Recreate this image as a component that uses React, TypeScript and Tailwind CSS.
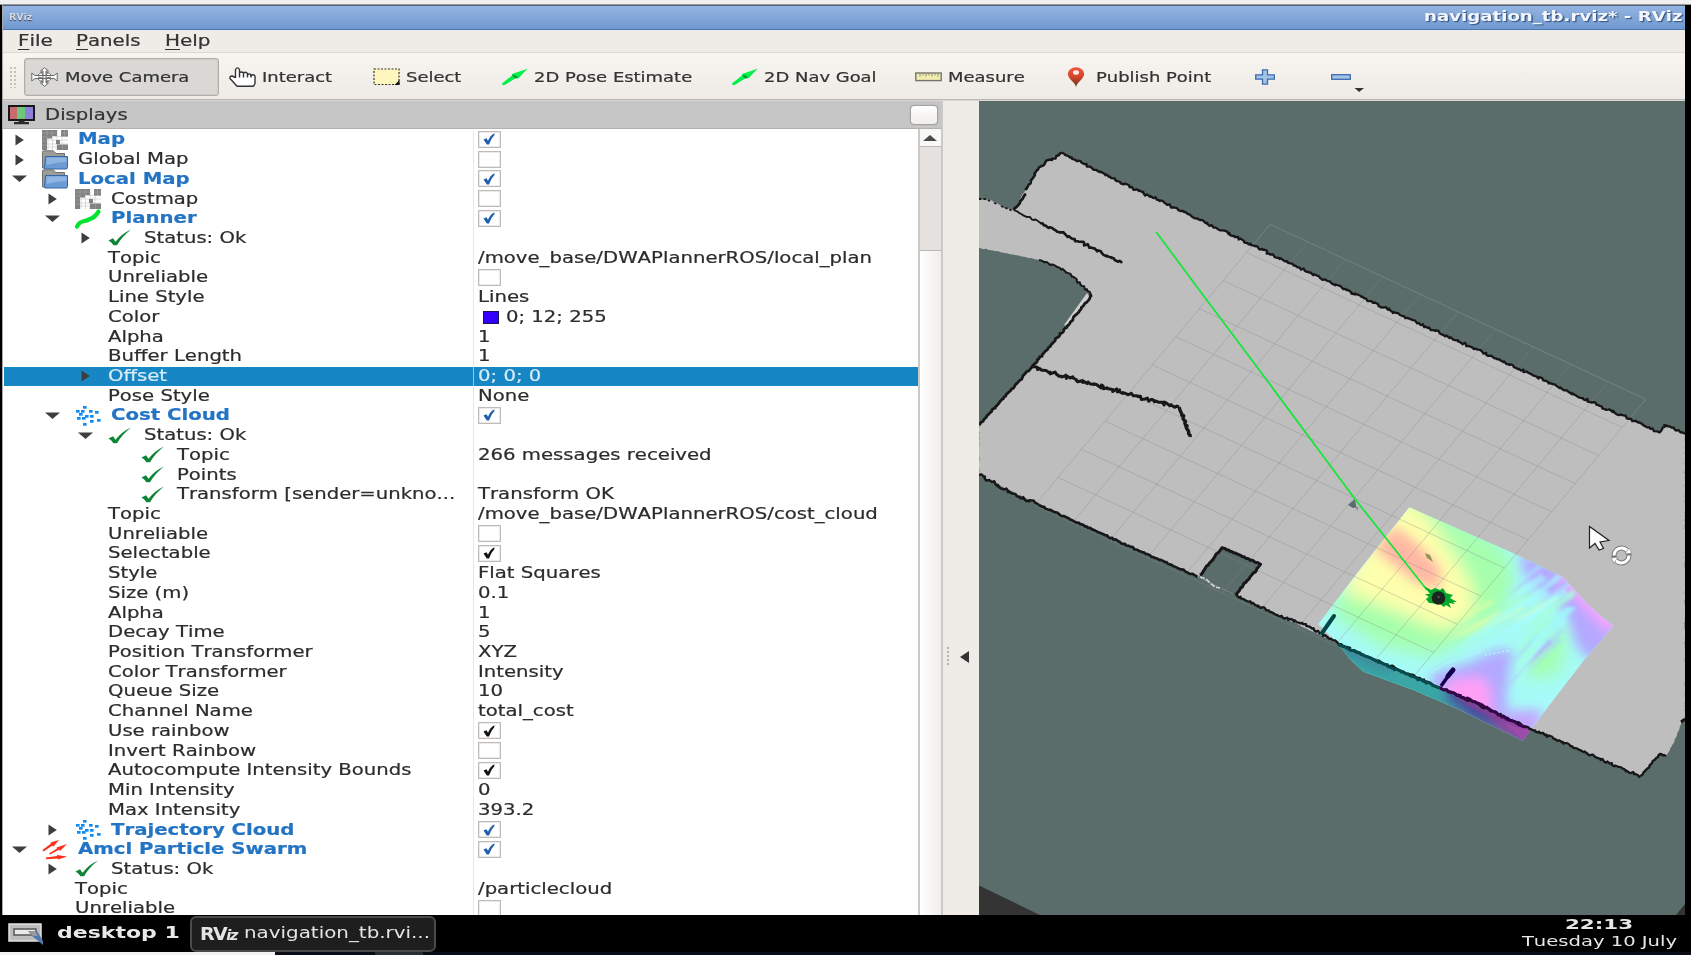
import React from "react";

type IconName = "grid" | "folder" | "path" | "check" | "cloud" | "arrows";
type Value = string | { box: "off" | "blue" | "black" } | { color: string; text: string };
interface Row {
  level: number;
  label: string;
  icon?: IconName;
  arrow?: "right" | "down";
  bold?: boolean;
  selected?: boolean;
  value?: Value;
}

const off = { box: "off" } as const;
const blue = { box: "blue" } as const;
const black = { box: "black" } as const;

const rows: Row[] = [
  { level: 0, label: "Map", icon: "grid", arrow: "right", bold: true, value: blue },
  { level: 0, label: "Global Map", icon: "folder", arrow: "right", value: off },
  { level: 0, label: "Local Map", icon: "folder", arrow: "down", bold: true, value: blue },
  { level: 1, label: "Costmap", icon: "grid", arrow: "right", value: off },
  { level: 1, label: "Planner", icon: "path", arrow: "down", bold: true, value: blue },
  { level: 2, label: "Status: Ok", icon: "check", arrow: "right" },
  { level: 2, label: "Topic", value: "/move_base/DWAPlannerROS/local_plan" },
  { level: 2, label: "Unreliable", value: off },
  { level: 2, label: "Line Style", value: "Lines" },
  { level: 2, label: "Color", value: { color: "#3300ff", text: "0; 12; 255" } },
  { level: 2, label: "Alpha", value: "1" },
  { level: 2, label: "Buffer Length", value: "1" },
  { level: 2, label: "Offset", arrow: "right", selected: true, value: "0; 0; 0" },
  { level: 2, label: "Pose Style", value: "None" },
  { level: 1, label: "Cost Cloud", icon: "cloud", arrow: "down", bold: true, value: blue },
  { level: 2, label: "Status: Ok", icon: "check", arrow: "down" },
  { level: 3, label: "Topic", icon: "check", value: "266 messages received" },
  { level: 3, label: "Points", icon: "check" },
  { level: 3, label: "Transform [sender=unkno...", icon: "check", value: "Transform OK" },
  { level: 2, label: "Topic", value: "/move_base/DWAPlannerROS/cost_cloud" },
  { level: 2, label: "Unreliable", value: off },
  { level: 2, label: "Selectable", value: black },
  { level: 2, label: "Style", value: "Flat Squares" },
  { level: 2, label: "Size (m)", value: "0.1" },
  { level: 2, label: "Alpha", value: "1" },
  { level: 2, label: "Decay Time", value: "5" },
  { level: 2, label: "Position Transformer", value: "XYZ" },
  { level: 2, label: "Color Transformer", value: "Intensity" },
  { level: 2, label: "Queue Size", value: "10" },
  { level: 2, label: "Channel Name", value: "total_cost" },
  { level: 2, label: "Use rainbow", value: black },
  { level: 2, label: "Invert Rainbow", value: off },
  { level: 2, label: "Autocompute Intensity Bounds", value: black },
  { level: 2, label: "Min Intensity", value: "0" },
  { level: 2, label: "Max Intensity", value: "393.2" },
  { level: 1, label: "Trajectory Cloud", icon: "cloud", arrow: "right", bold: true, value: blue },
  { level: 0, label: "Amcl Particle Swarm", icon: "arrows", arrow: "down", bold: true, value: blue },
  { level: 1, label: "Status: Ok", icon: "check", arrow: "right" },
  { level: 1, label: "Topic", value: "/particlecloud" },
  { level: 1, label: "Unreliable", value: off },
];

const indents = ["pl-0", "pl-[33px]", "pl-[66px]", "pl-[99px]"];

function RowIcon({ name }: { name: IconName }) {
  return (
    <svg viewBox="0 0 26 20" className="h-[20px] w-[26px] shrink-0">
      {name === "grid" && (
        <g>
          <rect width="26" height="20" fill="#fff" />
          <path d="M6 0V20M10.500 0V20M15 0V20M20 0V20M0 6.500H26M0 10H26M0 14H26M0 17H26" stroke="#d2d2d2" strokeWidth=".8" />
          <path d="M0 0H15V6H10V8.500H5V20H0ZM19 0H26V6.500H19ZM15 14.500H26V20H15ZM14 10H18V14H14Z" fill="#828282" />
          <path d="M5 0V8M10 0V6M0 3H15M0 7H5M0 11H5M0 15H5M19 3H26M22.500 0V6M20.500 15V20" stroke="#a0a0a0" strokeWidth=".7" />
        </g>
      )}
      {name === "folder" && (
        <g>
          <path d="M.5 2.2Q.5.8 2 .8H11L14 3.5H22.5V18H.5Z" fill="#9c9c98" stroke="#6f6f6f" />
          <path d="M3.5 6.5H25.5V17.5Q25.500 19 24 19H3.500Q2 19 2.500 17.500Z" fill="#6c9bd4" stroke="#3465a4" />
          <path d="M4.500 7.500H24.500V12Q15 12 4.500 15Z" fill="#8fb6e2" />
        </g>
      )}
      {name === "path" && (
        <path d="M2 17.500C5 11 9 13 14 10.500C18 8.500 20 9 23.500 2.500" fill="none" stroke="#00e430" strokeWidth="4.200" strokeLinecap="round" />
      )}
      {name === "check" && (
        <path d="M.5 12.500L5 10.300L7.500 13.800Q14 5.500 23 1.500Q14 8.500 9 17.300H5.500Q3.500 14 .5 12.500Z" fill="#0c8536" />
      )}
      {name === "cloud" && (
        <g fill="#0a8bf5">
          {[[8, 0], [1, 4], [6, 4], [14, 4], [20, 5], [4, 7], [10, 9], [15, 9], [2, 11], [7, 11], [22, 13], [15, 14], [8, 17]].map(([x, y]) => (
            <rect key={x + "-" + y} x={x} y={y} width="3.600" height="2.700" />
          ))}
        </g>
      )}
      {name === "arrows" && (
        <g fill="#fb2d1c">
          <path d="M.5 10L9 3.500L8.500 2.500L17 0L11 7L10.500 5.500L1.500 11.500Z" />
          <path d="M7 13.500L15 8.500L14.500 7.500L25 4L18 11L17.500 9.500L8 14.500Z" />
          <path d="M4 17.500L15 16L15 15L25 16.500L16 19.500L16 18.500L4 19.200Z" />
        </g>
      )}
    </svg>
  );
}

function Arrow({ dir }: { dir?: "right" | "down" }) {
  return (
    <svg viewBox="0 0 15 20" className="h-[20px] w-[15px] shrink-0" fill="#3e3e3e">
      {dir === "right" && <path d="M3.500 4.500L11.800 10L3.500 15.500Z" />}
      {dir === "down" && <path d="M0 6.500H15L7.500 13Z" />}
    </svg>
  );
}

function CheckBox({ state }: { state: "off" | "blue" | "black" }) {
  return (
    <span className="mb-px flex h-[17px] w-[23px] shrink-0 items-center justify-center border border-[#c0bbb6] bg-white shadow-[inset_0_0_0_0.5px_#dcd8d4]">
      {state !== "off" && (
        <svg viewBox="0 0 12 12" className={"mr-px h-[12px] w-[12px] " + (state === "blue" ? "fill-[#1f5fae]" : "fill-[#111]")}>
          <path d="M.5 6.500L3.500 5.300L5 7.800Q7 2.500 11.500 .3L11.300 2.200Q8 5.500 6 11.500H3.800Z" />
        </svg>
      )}
    </span>
  );
}

function ValueCell({ value }: { value?: Value }) {
  if (value === undefined) return null;
  if (typeof value === "string") {
    return <span className="inline-block origin-left scale-x-[1.312]">{value}</span>;
  }
  if ("box" in value) return <CheckBox state={value.box} />;
  return (
    <>
      <span className="mr-[7px] ml-[5px] h-[13px] w-[16px] border border-[#1c1450] bg-[#3300ff]" />
      <span className="inline-block origin-left scale-x-[1.310]">{value.text}</span>
    </>
  );
}

function TreeRow({ row }: { row: Row }) {
  return (
    <div className={"flex h-[19.730px] shrink-0 " + (row.selected ? "bg-[#1686c4] text-[#d8ecf8]" : "text-[#2c2c2c]")}>
      <div className="flex w-[470px] shrink-0 items-center border-r border-[#dddddd]/70">
        <div className={"flex items-center whitespace-nowrap " + indents[row.level]}>
          <div className="mr-[11px] ml-[8px] flex w-[19px] items-center">
            <span className="flex w-[15px]">
              <Arrow dir={row.arrow} />
            </span>
          </div>
          {row.icon && (
            <span className="mr-[10px] flex">
              <RowIcon name={row.icon} />
            </span>
          )}
          <span className={"inline-block origin-left " + (row.bold ? "scale-x-[1.313] font-bold text-[#2474c4]" : "scale-x-[1.310]")}>{row.label}</span>
        </div>
      </div>
      <div className="flex items-center pl-[3.600px] whitespace-nowrap">
        <ValueCell value={row.value} />
      </div>
    </div>
  );
}

function ToolText({ children }: { children: React.ReactNode }) {
  return (
    <span className="mt-px inline-block origin-left scale-x-[1.330] text-[13.500px] whitespace-nowrap text-[#333] [-webkit-text-stroke:0.2px]">
      {children}
    </span>
  );
}

function GreenArrow() {
  return (
    <svg viewBox="0 0 27 18" className="h-[18px] w-[27px]">
      <path d="M1 15.500L11 7.500L11 6L26.500 .8L17.500 10.200L14.500 10.200L4 16.800Q1 18 1 15.500Z" fill="#00f04a" />
      <path d="M11 7L14.500 7L17 10L14 10.500Z" fill="#0a9a35" />
    </svg>
  );
}

function Toolbar() {
  return (
    <div className="flex h-[46px] items-center bg-linear-to-b from-[#f8f5f1] to-[#eeeae5] pt-px pl-[6px]">
      <div className="h-[22px] w-[8px] bg-[radial-gradient(#c3bfba_1px,transparent_1.300px)] bg-size-[4px_4px]" />
      <div className="ml-[7px] flex h-[38px] w-[195px] items-center rounded-[3px] border border-[#b0ada9] bg-[#dad8d4] pl-[6px] shadow-[inset_0_0_0_0.5px_#c4c1bd]">
        <svg viewBox="0 0 27 20" className="mr-[7px] h-[20px] w-[27px]" fill="#fff" stroke="#6a6a6a" strokeWidth="1">
          <ellipse cx="13.500" cy="10" rx="7" ry="5" />
          <path d="M13.500 .8L17.500 4H15V16H17.500L13.500 19.200L9.500 16H12V4H9.500Z" />
          <path d="M.8 6L4 8.500H23L26.200 6V14L23 11.500H4L.8 14Z" />
          <path d="M10 5Q14 10 10 15M17 5Q13 10 17 15M7 10Q13 13 20 10" fill="none" />
        </svg>
        <ToolText>Move Camera</ToolText>
      </div>
      <div className="ml-[10px] flex w-[144px] items-center">
        <svg viewBox="0 0 27 20" className="mr-[6px] h-[20px] w-[27px]" fill="#fff" stroke="#333" strokeWidth="1.400" strokeLinejoin="round">
          <path d="M6.500 17.500L1 11.500Q.5 9 3 9L6.500 10.500V2.500Q8.500 -.8 10.500 2.500V8V5.800Q12.500 4 14.500 5.800V8V6Q16.500 4.300 18.500 6.500V8Q20.500 5.800 22 8V9Q24.500 6.500 26 9V16.500L24.500 19.200H8Z" />
          <path d="M10.500 8V10.500M14.500 8V10.500M18.500 8V10.500M22 8V10.500" />
        </svg>
        <ToolText>Interact</ToolText>
      </div>
      <div className="flex w-[128px] items-center">
        <svg viewBox="0 0 27 18" className="mr-[6px] h-[18px] w-[27px]">
          <rect x="1" y="1" width="25" height="15.500" fill="#fdf7bd" stroke="#333" strokeWidth="1.200" strokeDasharray="2 1.500" />
          <path d="M26.500 12V17H21.500Z" fill="#111" />
        </svg>
        <ToolText>Select</ToolText>
      </div>
      <div className="flex w-[230px] items-center gap-[6px]">
        <GreenArrow />
        <ToolText>2D Pose Estimate</ToolText>
      </div>
      <div className="flex w-[184px] items-center gap-[6px]">
        <GreenArrow />
        <ToolText>2D Nav Goal</ToolText>
      </div>
      <div className="flex w-[152px] items-center">
        <svg viewBox="0 0 27 10" className="mr-[6px] h-[10px] w-[27px]">
          <rect x=".8" y="1" width="25.400" height="7.600" fill="#f1ecb0" stroke="#76746a" strokeWidth="1.400" />
          <path d="M5 1.500V4.500M8 1.500V3.500M11 1.500V4.500M14 1.500V3.500M17 1.500V4.500M20 1.500V3.500M23 1.500V4.500" stroke="#8f8b78" />
        </svg>
        <ToolText>Measure</ToolText>
      </div>
      <div className="flex w-[188px] items-center">
        <svg viewBox="0 0 18 20" className="mr-[11px] h-[20px] w-[18px]">
          <defs>
            <linearGradient id="pin" x1="0" y1="0" x2="0" y2="1">
              <stop offset="0" stopColor="#f4553f" />
              <stop offset=".5" stopColor="#cf4429" />
              <stop offset="1" stopColor="#5a3a20" />
            </linearGradient>
          </defs>
          <path d="M9 20C8 15 .8 12 .8 6.800A8.200 6.500 0 0 1 17.200 6.800C17.200 12 10 15 9 20Z" fill="url(#pin)" />
          <ellipse cx="9" cy="5.500" rx="3" ry="2.300" fill="#fdebe8" />
        </svg>
        <ToolText>Publish Point</ToolText>
      </div>
      <svg viewBox="0 0 20 16" className="mr-[56px] h-[16px] w-[20px]" fill="#a3c3e8" stroke="#3c6cb0" strokeWidth="1.300">
        <path d="M7.500 .8H12.500V5.800H19.300V10.200H12.500V15.200H7.500V10.200H.7V5.800H7.500Z" />
      </svg>
      <svg viewBox="0 0 34 32" className="h-[32px] w-[34px]">
        <rect x=".7" y="13.700" width="18.600" height="4.600" fill="#a3c3e8" stroke="#3c6cb0" strokeWidth="1.300" />
        <path d="M23.500 27H33L28.200 31Z" fill="#333" />
      </svg>
    </div>
  );
}

const noise = (n: number) => {
  const s = Math.sin(n * 127.1 + 11.7) * 43758.5453;
  return s - Math.floor(s) - 0.5;
};

function roughLine(points: number[][], amount: number) {
  const out: string[] = [];
  points.slice(1).forEach((end, i) => {
    const start = points[i];
    const length = Math.hypot(end[0] - start[0], end[1] - start[1]);
    const steps = Math.max(1, Math.round(length / 1.800));
    for (let k = 0; k <= steps; k++) {
      const t = k / steps;
      const wobble = k === 0 || k === steps ? 0 : amount;
      const x = start[0] + (end[0] - start[0]) * t + noise(k + start[0]) * wobble;
      const y = start[1] + (end[1] - start[1]) * t + noise(k * 3 + start[1]) * wobble;
      out.push(x.toFixed(1) + "," + y.toFixed(1));
    }
  });
  return out.join(" ");
}

const walls: { pts: number[][]; w: number; a: number }[] = [
  { pts: [[1025.2, 190], [1026, 189], [1037, 170], [1048.2, 160], [1052, 160], [1062, 152.7]], w: 2.5, a: 2.2 },
  { pts: [[1013.7, 210], [1026, 194]], w: 2.8, a: 1.2 },
  { pts: [[1062, 152.7], [1120, 182], [1200, 220], [1300, 268], [1400, 315], [1500, 360], [1600, 406], [1659.7, 432.3], [1664.3, 425], [1685, 433.3]], w: 2.3, a: 2.4 },
  { pts: [[1013.7, 210], [1040, 223]], w: 1.8, a: 2.8 },
  { pts: [[1040, 223], [1066, 235], [1122, 263]], w: 2.6, a: 2.6 },
  { pts: [[1039, 260], [1060, 268], [1073.4, 276.7], [1082, 286], [1091.8, 295]], w: 2, a: 2.2 },
  { pts: [[1091.8, 295], [1070, 323], [1032, 366.7], [979, 425]], w: 2.8, a: 1.3 },
  { pts: [[1032, 367], [1070, 378], [1110, 389], [1145, 399], [1179, 407]], w: 3, a: 3.6 },
  { pts: [[1179, 407], [1184, 420], [1190, 437]], w: 3.4, a: 2.4 },
  { pts: [[979, 475], [1010, 492], [1039, 505]], w: 2.4, a: 3.2 },
  { pts: [[1039, 505], [1120, 542], [1197.6, 576.7]], w: 2.6, a: 1.3 },
  { pts: [[1200, 575], [1222, 547.7], [1260.6, 564.3], [1235.3, 595]], w: 3, a: 1.2 },
  { pts: [[1235.3, 595], [1270, 612], [1310, 627], [1337.8, 643.3], [1390, 666], [1439.9, 687.3], [1526.3, 726.7], [1580, 750], [1640.3, 776.7]], w: 2.3, a: 2.3 },
  { pts: [[1640.3, 776.7], [1652, 763], [1660, 754], [1666, 756]], w: 2.4, a: 1.4 },
  { pts: [[1681, 722], [1685, 719]], w: 3, a: 1 },
];

const free = [
  [979, 199.3], [990, 200], [997, 203], [1004, 208], [1013.7, 210], [1025.2, 190], [1037, 170], [1048.2, 160], [1062, 152.7],
  [1120, 182], [1200, 220], [1300, 268], [1400, 315], [1500, 360], [1600, 406], [1659.7, 432.3], [1664.3, 425], [1685, 433.3],
  [1685, 719], [1681.7, 722], [1677, 735], [1667, 755], [1660, 754], [1640.3, 776.7], [1526.3, 726.7], [1439.9, 687.3], [1337.8, 643.3],
  [1235.3, 595], [1198, 577], [1120, 542], [1039, 505], [979, 475], [979, 425], [1032, 366.7], [1091.8, 295], [1073.4, 276.7],
  [1060, 268], [1039, 260], [1015, 255], [979, 247.7],
];

const streakBands = [
  { x: 400, y: 440, dx: 20, dy: -3, n: 9, len: 150, slope: 0.55, colors: ["#d6ffa6", "#a6ffb4", "#f0ffa6"] },
  { x: 430, y: 500, dx: 24, dy: -8, n: 11, len: 170, slope: 0.75, colors: ["#a6fffa", "#a6ffd8", "#a8f4ff"] },
  { x: 600, y: 330, dx: 16, dy: 4, n: 8, len: 110, slope: 0.8, colors: ["#a6e6ff", "#b4b4ff", "#a6f6ff"] },
  { x: 590, y: 580, dx: 14, dy: -3, n: 7, len: 120, slope: 1.1, colors: ["#a8d6ff", "#b4aaff", "#a6f4ff"] },
];

const cloudOutline = "M328 52L490 124L640 190L720 228L790 262L835 312L860 340L905 380L940 408L845 520L760 630L668 752L480 660L340 600L190 545L150 508L115 462L55 402L190 226Z";

function MapView() {
  return (
    <svg viewBox="979 101 706 814" className="block h-[814px] w-[706px]">
      <defs>
        <clipPath id="cloudClip"><path d={cloudOutline} /></clipPath>
        <clipPath id="outsideClip"><path d="M0 400L60 432L115 460L270 530L420 592L600 672L695 716L800 790V900H0Z" /></clipPath>
        <filter id="b12" x="-50%" y="-50%" width="200%" height="200%"><feGaussianBlur stdDeviation="17" /></filter>
        <filter id="b20" x="-50%" y="-50%" width="200%" height="200%"><feGaussianBlur stdDeviation="26" /></filter>
        <filter id="b3" x="-50%" y="-50%" width="200%" height="200%"><feGaussianBlur stdDeviation="5" /></filter>
      </defs>
      <rect x="979" y="101" width="706" height="814" fill="#5a6d6b" />
      <path d="M979 885.500L1040 915H979Z M1685 904V915H1676Z" fill="#343434" />
      <polygon points={roughLine(free, 1)} fill="#bebebe" />
      <path d="M1087 293L1064 325L1067 326L1090 298Z" fill="#cfcfcf" />
      <polygon points="1222,547.7 1260.6,564.3 1235.3,595 1198.5,576.7" fill="#5a6d6b" />
      <g transform="translate(1300 490) scale(.33333)">
        <g clipPath="url(#cloudClip)">
          <rect width="1000" height="800" fill="#a6fbf8" />
          <g filter="url(#b20)">
            <path d="M330 0L520 100L630 200L640 300L600 370L480 460L400 500L250 470L90 370L180 200Z" fill="#a4ffac" />
            <path d="M310 20L370 60L460 190L520 290L520 380L430 420L330 380L120 300L190 180Z" fill="#feffac" />
            <path d="M750 380L800 440L780 550L690 570L670 500Z" fill="#a2ffae" />
            <path d="M400 20L600 160L500 180L390 100Z" fill="#a8ffb0" />
          </g>
          <g filter="url(#b12)">
            <path d="M280 110L330 140L420 230L420 300L350 280L225 180Z" fill="#ffb8a4" />
            <path d="M660 180L800 240L980 400L880 520L830 470L800 370L750 320L670 250Z" fill="#b4a8ff" />
            <path d="M770 240L820 250L970 400L920 430L850 350L790 290Z" fill="#f4a4ff" />
            <path d="M590 480L640 480L620 600L620 700L500 640L390 590L400 550L500 520Z" fill="#b4a8ff" />
            <path d="M450 570L540 560L570 590L580 700L500 670L430 620Z" fill="#ff9ff6" />
            <path d="M630 660L730 660L700 760L600 700Z" fill="#c4a6ff" />
          </g>
          <g filter="url(#b3)">
            {streakBands.map((band, b) =>
              Array.from({ length: band.n }, (_, i) => {
                const x = band.x + band.dx * i + noise(i + b * 31) * 24;
                const y = band.y + band.dy * i + noise(i + b * 17 + 5) * 50;
                const len = band.len * (1 + noise(i + b * 7) * 0.6);
                return (
                  <path
                    key={b + "-" + i}
                    d={`M${x} ${y}L${x + len} ${y - len * band.slope - 8}L${x + len + 12} ${y - len * band.slope + 6}Z`}
                    fill={band.colors[i % 3]}
                    opacity=".6"
                  />
                );
              }),
            )}
            <path d="M690 450L800 350L830 352L740 440L700 480Z" fill="#9ef8fb" opacity=".8" />
            <path d="M650 520L740 400L760 410L690 520L655 610Z" fill="#a6fff0" opacity=".6" />
          </g>
          <path d="M395 548L440 520L500 500L545 485M555 495L625 482" fill="none" stroke="#b8f8ff" strokeWidth="4" strokeDasharray="6 7" />
          <g clipPath="url(#outsideClip)">
            <rect width="1000" height="800" fill="#3aa5a5" />
            <g filter="url(#b12)">
              <path d="M60 400L300 520L260 540L100 480Z" fill="#37869c" />
              <path d="M440 590L500 600L720 700L690 770L520 690L440 625Z" fill="#50499e" />
              <path d="M560 640L720 700L690 780L600 730Z" fill="#8f459e" />
            </g>
            <path d="M440 595L612 676L598 694L500 645Z" fill="#8c3f96" opacity=".7" />
            <path d="M610 700L695 722L670 752Z" fill="#a24dac" opacity=".7" />
          </g>
        </g>
      </g>
      <g fill="none" stroke="#858889" strokeOpacity=".36" strokeWidth="1">
        {Array.from({ length: 11 }, (_, i) => (
          <g key={i}>
            <path d={`M${1270.2 + 37.57 * i} ${224.3 + 17.5 * i}l-235.800 281.200`} />
            <path d={`M${1270.2 - 23.58 * i} ${224.3 + 28.12 * i}l375.700 175`} />
          </g>
        ))}
      </g>
      <path d="M1270.200 224.300l375.700 175M1270.200 224.300l-21 25M1645.900 399.300l-16 19" fill="none" stroke="#8a9594" strokeOpacity=".35" />
      <g fill="none" stroke="#171717" strokeLinejoin="round">
        {walls.map((wall, i) => (
          <polyline key={i} points={roughLine(wall.pts, wall.a)} strokeWidth={wall.w} />
        ))}
        <path d="M979 199L985 199L990 201M994 203L998 204M1001 206L1013 211" strokeWidth="1.800" strokeDasharray="2.500 2" />
      </g>
      <path d="M1200 577L1206 579L1210 583L1215 587L1220 588" stroke="#d6d6d6" strokeWidth="1.600" strokeDasharray="5 1.500" fill="none" />
      <polyline points={roughLine([[1338, 644], [1390, 667], [1440, 688]], 1.5)} stroke="#064a4c" strokeWidth="3" fill="none" />
      <polyline points={roughLine([[1440, 688], [1480, 704], [1503, 717], [1526, 727]], 1.5)} stroke="#35064a" strokeWidth="3" fill="none" />
      <path d="M1322 633L1334 616" stroke="#06464a" strokeWidth="4" strokeLinecap="round" />
      <path d="M1441 686L1449 675" stroke="#150050" strokeWidth="3.500" />
      <path d="M1448 676L1453 670" stroke="#150050" strokeWidth="5" strokeLinecap="round" />
      <path d="M1355 499L1348 505L1353 508L1358 507L1357 511" fill="#5a6d6b" />
      <path d="M1425 553L1430 555L1433 562L1427 558Z" fill="#98905a" />
      <polyline points="1156.2,232 1200,291 1260,371 1355,499 1427,590" stroke="#12e636" strokeWidth="1.700" fill="none" />
      <path
        d="M1424 586L1431 590L1435 588L1440 590L1443 588L1446 593L1453 595L1450 598L1457 602L1453 602L1455 604L1449 603L1451 608L1446 605L1444 607L1440 604L1429 603L1426 599L1429 597L1425 594L1430 594Z"
        fill="#05a82b"
      />
      <circle cx="1438.500" cy="598" r="6.800" fill="#1d2320" />
      <circle cx="1438.500" cy="597" r="1.300" fill="#4a514d" />
      <path d="M1589.500 526.500V548L1595 543.500L1599 550L1603.500 548.500L1600 542L1609 540.500Z" fill="#fff" stroke="#222" strokeWidth="1.200" />
      <circle cx="1621.500" cy="555.500" r="7.500" fill="none" stroke="#777" strokeWidth="5" />
      <circle cx="1621.500" cy="555.500" r="7.500" fill="none" stroke="#fff" strokeWidth="3" strokeDasharray="19 4.500" />
      <path d="M1611 558L1618 557L1614 563ZM1632 553L1625 554L1629 548Z" fill="#fff" stroke="#888" strokeWidth=".7" />
    </svg>
  );
}

function DisplaysPanel() {
  return (
    <div className="flex h-[814px] w-[940px] flex-col border-r-2 border-[#cbc8c5]">
      <div className="flex h-[28px] shrink-0 items-center border-b border-[#b5b0ab] bg-[#c6c6c6] pl-[5px]">
        <svg viewBox="0 0 27 20" className="mt-px mr-[10px] h-[20px] w-[27px]">
          <rect x=".8" y=".8" width="25.400" height="14.400" fill="#222" stroke="#111" strokeWidth="1.500" />
          <path d="M2 2H9V14H2Z" fill="#c96a6c" />
          <path d="M9 2H17V14H9Z" fill="#6cc97c" />
          <path d="M17 2H25V14H17Z" fill="#8d80d8" />
          <path d="M10.500 15.500H16.500V17H21V19.200H6V17H10.500Z" fill="#2b2b2b" />
        </svg>
        <span className="mt-[2px] inline-block origin-left scale-x-[1.310] text-[15px] text-[#333] [-webkit-text-stroke:0.2px]">Displays</span>
        <span className="mr-[3px] ml-auto h-[20px] w-[28px] rounded-[4px] border border-[#a5a19c] bg-linear-to-b from-white to-[#f0eeec] shadow-[0_0_1px_#999]" />
      </div>
      <div className="flex min-h-0 grow">
        <div className="flex w-[915px] shrink-0 flex-col overflow-hidden bg-white pt-px pl-px text-[15px] leading-[19px] [-webkit-text-stroke:0.2px]">
          {rows.map((row, i) => (
            <TreeRow key={i} row={row} />
          ))}
        </div>
        <div className="flex w-[23px] flex-col border-l-2 border-[#cbc8c5] bg-[#e5e1df]">
          <div className="flex h-[18px] items-center justify-center border-b border-[#bdb9b5] bg-[#f8f8f7]">
            <svg viewBox="0 0 14 6" className="mr-px h-[6px] w-[14px]"><path d="M0 6L7 0L14 6Z" fill="#4a4a4a" /></svg>
          </div>
          <div className="h-[104px] border-b border-[#bdb9b5]" />
          <div className="grow bg-linear-to-r from-white to-[#efeeea]" />
        </div>
      </div>
    </div>
  );
}

export default function App() {
  return (
    <div className="flex h-[955px] w-[1691px] flex-col overflow-hidden bg-black font-['DejaVu_Sans',sans-serif] [font-kerning:none]">
      <div className="h-[5px] shrink-0 border-b border-[#9a9a9a] bg-[#f0f0f0]" />
      <div className="flex h-[910px] shrink-0">
        <div className="w-[2px] shrink-0 bg-black" />
        <div className="flex w-[1683px] shrink-0 flex-col overflow-hidden border-l border-[#aaa] bg-[#efebe7]">
          <div className="flex h-[25px] shrink-0 items-center border-t border-b border-t-[#50607a] border-b-[#4c78b4] bg-linear-to-b from-[#94b4e2] to-[#7099d0]">
            <span className="ml-[6px] inline-block w-[1415px] origin-left text-[9px] font-bold text-[#d8dce4] text-shadow-[0_1px_1px_#445]">
              <span className="inline-block origin-left scale-x-[1.050]">RViz</span>
            </span>
            <span className="mb-[2px] inline-block origin-left scale-x-[1.345] text-[13.500px] font-bold whitespace-nowrap text-[#f3f6fb] text-shadow-[1px_1px_1px_#34507c]">
              navigation_tb.rviz* - RViz
            </span>
          </div>
          <div className="flex h-[23px] shrink-0 items-center border-b border-[#dcd8d3] pl-[15px] text-[15px] text-[#333] [-webkit-text-stroke:0.2px]">
            <span className="w-[58px]"><span className="inline-block origin-left scale-x-[1.330]"><u className="underline-offset-[3px]">F</u>ile</span></span>
            <span className="w-[89px]"><span className="inline-block origin-left scale-x-[1.320]"><u className="underline-offset-[3px]">P</u>anels</span></span>
            <span className="inline-block origin-left scale-x-[1.330]"><u className="underline-offset-[3px]">H</u>elp</span>
          </div>
          <Toolbar />
          <div className="h-[2px] shrink-0 border-t border-[#bcb8b4] bg-[#d8d5d2]" />
          <div className="flex h-[814px] shrink-0">
            <DisplaysPanel />
            <div className="flex w-[36px] items-center gap-[10px] pl-[3px]">
              <div className="mt-[296px] h-[20px] w-[4px] bg-[radial-gradient(#b5b1ac_1px,transparent_1.300px)] bg-size-[4px_4px]" />
              <svg viewBox="0 0 9 12" className="mt-[298px] h-[12px] w-[9px]"><path d="M9 0V12L0 6Z" fill="#333" /></svg>
            </div>
            <MapView />
          </div>
        </div>
        <div className="grow bg-black" />
      </div>
      <div className="flex h-[37px] shrink-0 items-center bg-black">
        <svg viewBox="0 0 36 24" className="ml-[8px] h-[24px] w-[36px]">
          <rect x="1" y="2" width="32" height="17" fill="#bdbdbd" stroke="#e2e2e2" strokeWidth="1.500" />
          <rect x="6" y="7" width="22" height="6" fill="#e9e9e9" stroke="#555" strokeWidth="1.500" />
          <path d="M20 9H29L35 19V23L24 14Z" fill="#5279ad" />
          <path d="M20 9L27 9L30 14L25 14Z" fill="#9a9a9a" />
        </svg>
        <span className="ml-[13px] w-[133px] text-[15.500px] font-bold text-[#e8e8e8]">
          <span className="inline-block origin-left scale-x-[1.420] whitespace-nowrap">desktop 1</span>
        </span>
        <div className="flex h-[36px] w-[246px] items-center rounded-[6px] border-2 border-[#4b4b4b] bg-[#1e1e1e] pl-[8px] text-[#e4e4e4]">
          <span className="w-[44px] text-[18px] font-bold whitespace-nowrap">
            <span className="inline-block origin-left scale-x-[1.060] tracking-[-1.500px]">
              RV<span className="text-[14px] italic">iz</span>
            </span>
          </span>
          <span className="inline-block origin-left scale-x-[1.325] text-[15px] whitespace-nowrap">navigation_tb.rvi...</span>
        </div>
        <div className="mr-[13px] ml-auto flex w-[157px] flex-col items-center leading-[18px] text-[#e6e6e6]">
          <span className="-mt-[3px] inline-block scale-x-[1.480] text-[14.500px] leading-[18px] font-bold">22:13</span>
          <span className="inline-block scale-x-[1.350] text-[14.500px] leading-[16px] whitespace-nowrap">Tuesday 10 July</span>
        </div>
      </div>
      <div className="flex h-[3px] shrink-0 bg-[#0a0d18]">
        <div className="w-[275px] bg-[#f2f2f2]" />
        <div className="ml-[100px] w-[48px] bg-[#2a2c36]" />
      </div>
    </div>
  );
}
